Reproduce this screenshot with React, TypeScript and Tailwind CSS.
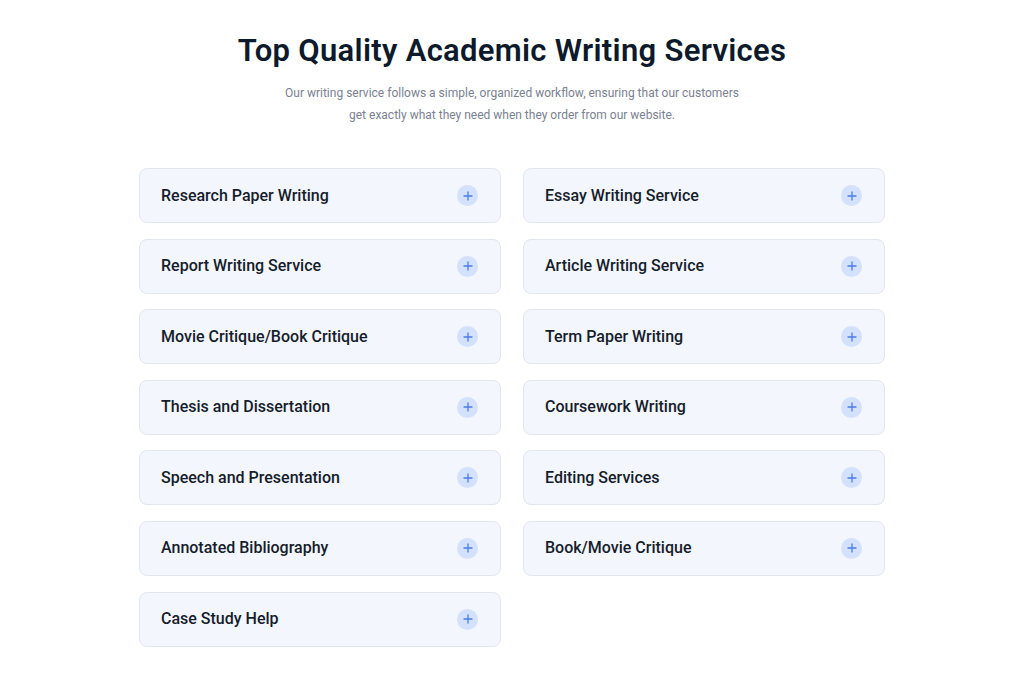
import React from 'react';

const SERVICES = [
  'Research Paper Writing',
  'Essay Writing Service',
  'Report Writing Service',
  'Article Writing Service',
  'Movie Critique/Book Critique',
  'Term Paper Writing',
  'Thesis and Dissertation',
  'Coursework Writing',
  'Speech and Presentation',
  'Editing Services',
  'Annotated Bibliography',
  'Book/Movie Critique',
  'Case Study Help',
];

const PlusBadge = () => (
  <span className="flex h-[21px] w-[21px] items-center justify-center rounded-full bg-[#d4e1fc]">
    <svg width="10" height="10" viewBox="0 0 10 10" fill="none">
      <path d="M5 1v8M1 5h8" stroke="#4a7ce6" strokeWidth="1.3" strokeLinecap="round" />
    </svg>
  </span>
);

export default function App() {
  return (
    <div className="min-h-[687px] w-full bg-white font-['Roboto',sans-serif]">
      <div className="flex flex-col items-center pt-[31px]">
        <h1 className="font-['Roboto',sans-serif] text-[31px] font-semibold leading-[40px] tracking-[0.3px] text-[#0d1a2b]">
          Top Quality Academic Writing Services
        </h1>
        <p className="mt-[12px] w-[462px] text-center text-[12px] leading-[21.5px] text-[#7a8191]">
          Our writing service follows a simple, organized workflow, ensuring that our customers get exactly what they need when they order from our website.
        </p>
      </div>

      <div className="mx-auto mt-[42px] grid w-[746px] grid-cols-2 gap-x-[22px] gap-y-[15.6px]">
        {SERVICES.map((name) => (
          <div
            key={name}
            className="flex h-[55px] items-center justify-between rounded-[8px] border border-[#e1e6ef] bg-[#f3f6fd] pl-[21px] pr-[22px]"
          >
            <span className="text-[16px] font-medium text-[#161d2b]">{name}</span>
            <PlusBadge />
          </div>
        ))}
      </div>
    </div>
  );
}
